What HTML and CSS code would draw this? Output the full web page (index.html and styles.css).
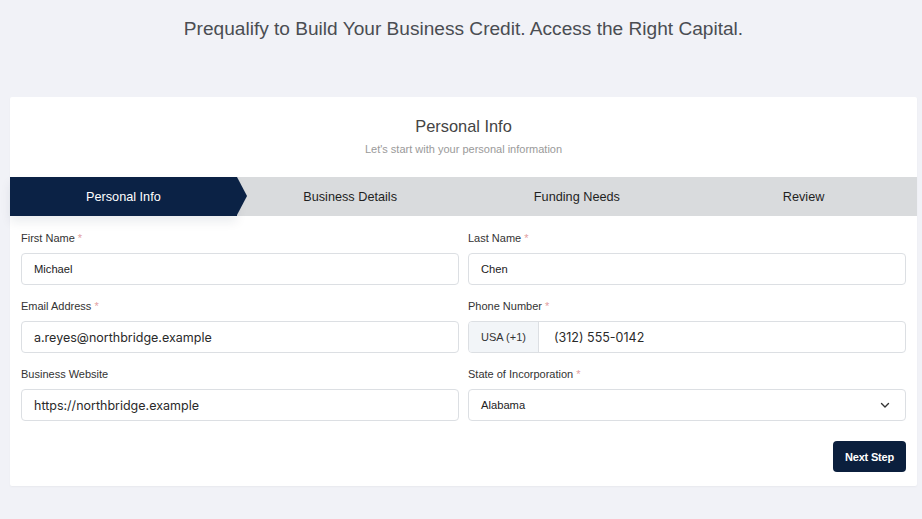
FILE: index.html
```html
<!DOCTYPE html>
<html lang="en">
<head>
<meta charset="utf-8">
<title>Prequalify</title>
<link rel="stylesheet" href="styles.css">
</head>
<body>
<header class="page-head">
  <h1 class="page-title">Prequalify to Build Your Business Credit. Access the Right Capital.</h1>
</header>
<main class="card">
  <div class="card-head">
    <h2 class="card-title">Personal Info</h2>
    <p class="card-sub">Let's start with your personal information</p>
  </div>
  <nav class="steps">
    <div class="step active">Personal Info</div>
    <div class="step">Business Details</div>
    <div class="step">Funding Needs</div>
    <div class="step">Review</div>
  </nav>
  <form class="form">
    <div class="grid">
      <div class="field">
        <label class="label">First Name <span class="req">*</span></label>
        <div class="input"><span class="val">Michael</span></div>
      </div>
      <div class="field">
        <label class="label">Last Name <span class="req">*</span></label>
        <div class="input"><span class="val">Chen</span></div>
      </div>
      <div class="field">
        <label class="label">Email Address <span class="req">*</span></label>
        <div class="input"><span class="val alt">a.reyes@northbridge.example</span></div>
      </div>
      <div class="field">
        <label class="label">Phone Number <span class="req">*</span></label>
        <div class="input group"><span class="addon">USA (+1)</span><span class="val alt phone">(312) 555-0142</span></div>
      </div>
      <div class="field">
        <label class="label">Business Website</label>
        <div class="input"><span class="val alt">https://northbridge.example</span></div>
      </div>
      <div class="field">
        <label class="label">State of Incorporation <span class="req">*</span></label>
        <div class="input select"><span class="val">Alabama</span>
          <svg class="chev" width="12" height="12" viewBox="0 0 12 12"><path d="M2.5 4.5 L6 8 L9.5 4.5" fill="none" stroke="#333" stroke-width="1.4" stroke-linecap="round" stroke-linejoin="round"/></svg>
        </div>
      </div>
    </div>
    <div class="actions">
      <button type="button" class="btn">Next Step</button>
    </div>
  </form>
</main>
</body>
</html>
```
FILE: styles.css
```css
* { box-sizing: border-box; }
html, body { margin: 0; padding: 0; }
body {
  background: #f1f2f7;
  font-family: "Liberation Sans", Arial, sans-serif;
  color: #333;
  width: 922px;
  height: 519px;
  overflow: hidden;
}
.page-head {
  height: 97px;
  padding-top: 16px;
  margin: 0 5px 0 10px;
}
.page-title {
  margin: 0;
  text-align: center;
  font-weight: 400;
  font-size: 19.1px;
  line-height: 26px;
  color: #4a4d52;
}
.card {
  margin: 0 5px 0 10px;
  background: #fff;
  border-radius: 2px;
  box-shadow: 0 1px 2px rgba(0,0,0,0.04);
}
.card-head {
  height: 80px;
  padding-top: 18px;
  text-align: center;
}
.card-title {
  margin: 0;
  font-weight: 400;
  font-size: 16.4px;
  line-height: 22px;
  color: #444;
}
.card-sub {
  margin: 5px 0 0;
  font-size: 11px;
  line-height: 14px;
  color: #9a9a9a;
}
.steps {
  display: flex;
  height: 39px;
  background: #d9dbdd;
}
.step {
  flex: 1;
  display: flex;
  align-items: center;
  justify-content: center;
  font-size: 12.7px;
  color: #1f1f1f;
  position: relative;
}
.step.active {
  background: #0b2245;
  color: #fff;
  box-shadow: 0 6px 10px rgba(11,34,69,0.08);
}
.step.active::after {
  content: "";
  position: absolute;
  top: 0;
  right: -10px;
  border-top: 19.5px solid transparent;
  border-bottom: 19.5px solid transparent;
  border-left: 10px solid #0b2245;
}
.form {
  padding: 15px 11px 14px 11px;
}
.grid {
  display: grid;
  grid-template-columns: 1fr 1fr;
  column-gap: 9px;
  row-gap: 14px;
}
.field {
  display: flex;
  flex-direction: column;
}
.label {
  font-size: 11px;
  line-height: 14px;
  color: #333;
  margin-bottom: 8px;
}
.req { color: #e3a0a0; }
.input {
  height: 32px;
  border: 1px solid #dcdfe3;
  border-radius: 4px;
  display: flex;
  align-items: center;
  padding: 0 12px;
  background: #fff;
}
.val {
  font-size: 11.2px;
  color: #222;
}
.val.alt {
  font-family: Inter, "Noto Sans", sans-serif;
  font-size: 12.5px;
  color: #2a2a2a;
}
.input.group { padding: 0; overflow: hidden; }
.addon {
  width: 70px;
  height: 100%;
  display: flex;
  align-items: center;
  justify-content: center;
  background: #f2f5f8;
  border-right: 1px solid #dcdfe3;
  font-size: 11px;
  color: #333;
}
.phone { padding-left: 15px; }
.select { justify-content: space-between; }
.chev { margin-right: 2px; }
.actions {
  display: flex;
  justify-content: flex-end;
  margin-top: 20px;
}
.btn {
  height: 31px;
  width: 73px;
  padding: 0;
  background: #0b1f3d;
  color: #fff;
  border: 0;
  border-radius: 4px;
  font-family: "Liberation Sans", Arial, sans-serif;
  font-size: 11px;
  font-weight: 700;
  letter-spacing: -0.2px;
}
```
